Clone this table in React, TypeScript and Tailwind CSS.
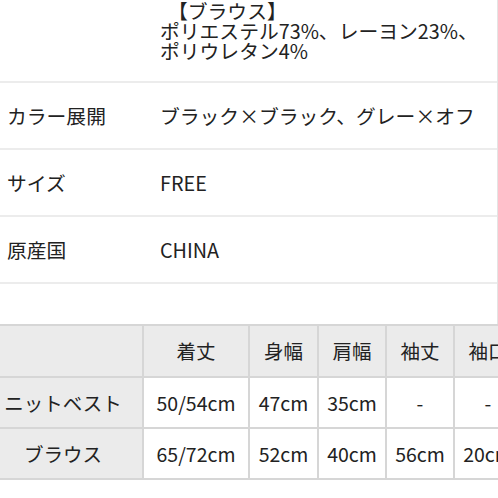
const specs = [
  { label: "カラー展開", value: "ブラック×ブラック、グレー×オフ" },
  { label: "サイズ", value: "FREE" },
  { label: "原産国", value: "CHINA" },
];

const heads = ["着丈", "身幅", "肩幅", "袖丈", "袖口"];
const rows = [
  { name: "ニットベスト", cells: ["50/54cm", "47cm", "35cm", "-", "-"] },
  { name: "ブラウス", cells: ["65/72cm", "52cm", "40cm", "56cm", "20cm"] },
];
const widths = ["w-[160px]", "w-[106px]", "w-[69px]", "w-[68px]", "w-[68px]", "w-[68px]"];

export default function App() {
  return (
    <div className="w-[498px] h-[498px] overflow-hidden bg-white text-[#222] text-[19.8px] font-['Noto_Sans_CJK_JP',sans-serif]">
      <div className="border-r border-[#e4e4e4] pb-[40px]">
        <div className="flex h-[83px] border-b-2 border-[#ececec]">
          <div className="w-[160px] shrink-0" />
          <div className="leading-[20px] mt-[1px]">
            <div className="ml-[8px]">【ブラウス】</div>
            <div>ポリエステル73%、レーヨン23%、</div>
            <div>ポリウレタン4%</div>
          </div>
        </div>
        {specs.map((s) => (
          <div key={s.label} className="flex items-center h-[67px] border-b-2 border-[#ececec]">
            <div className="w-[160px] shrink-0 pl-[7px]">{s.label}</div>
            <div className="whitespace-nowrap">{s.value}</div>
          </div>
        ))}
      </div>
      <table className="table-fixed border-collapse -ml-[18px] w-[539px] text-center text-[19.5px]">
        <colgroup>
          {widths.map((w, i) => (
            <col key={i} className={w} />
          ))}
        </colgroup>
        <thead>
          <tr className="h-[52px] bg-[#ebebeb]">
            <th className="border-2 border-[#d6d6d6] font-normal" />
            {heads.map((h) => (
              <th key={h} className="border-2 border-[#d6d6d6] font-normal whitespace-nowrap overflow-hidden">{h}</th>
            ))}
          </tr>
        </thead>
        <tbody>
          {rows.map((r) => (
            <tr key={r.name} className="h-[51px]">
              <td className="bg-[#ebebeb] border-2 border-[#d6d6d6] whitespace-nowrap">{r.name}</td>
              {r.cells.map((c, i) => (
                <td key={i} className="border-2 border-[#d6d6d6] whitespace-nowrap overflow-hidden">{c}</td>
              ))}
            </tr>
          ))}
        </tbody>
      </table>
    </div>
  );
}
